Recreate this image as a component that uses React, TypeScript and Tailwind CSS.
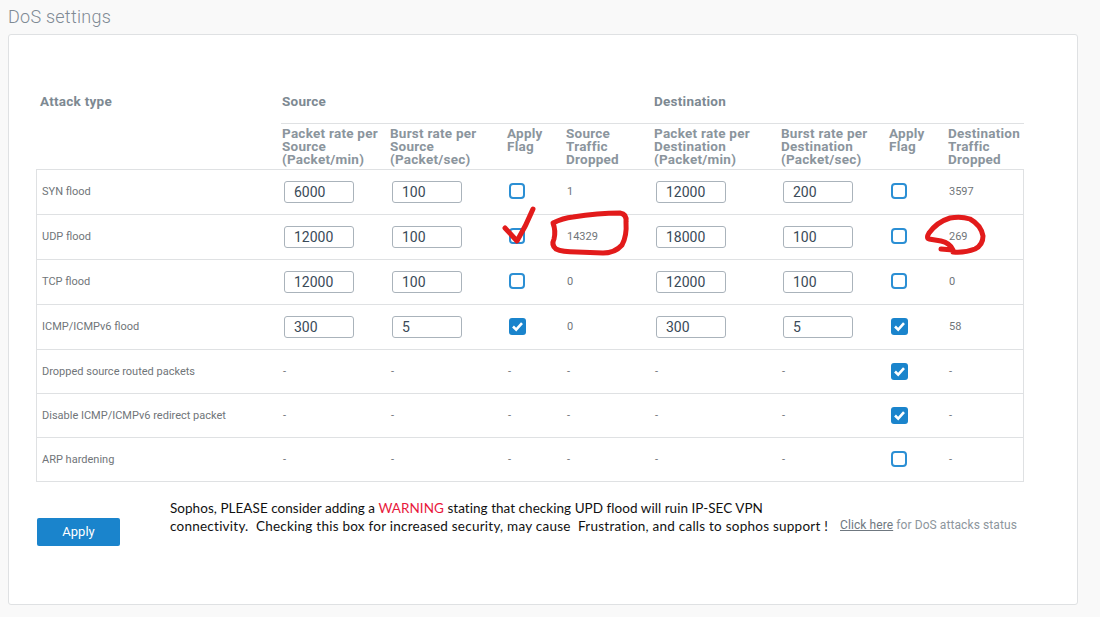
const headCols = "grid grid-cols-[246px_108px_117px_59px_88px_127px_108px_59px_76px]";
const bodyCols = "grid grid-cols-[244px_108px_117px_59px_88px_127px_108px_59px_75px]";

type Row = {
  name: string;
  src?: [string, string, boolean, string];
  dst?: [string, string, boolean, string];
  flag?: boolean;
  h: string;
};

const rows: Row[] = [
  { name: "SYN flood", src: ["6000", "100", false, "1"], dst: ["12000", "200", false, "3597"], h: "h-[45px]" },
  { name: "UDP flood", src: ["12000", "100", false, "14329"], dst: ["18000", "100", false, "269"], h: "h-[45px]" },
  { name: "TCP flood", src: ["12000", "100", false, "0"], dst: ["12000", "100", false, "0"], h: "h-[45px]" },
  { name: "ICMP/ICMPv6 flood", src: ["300", "5", true, "0"], dst: ["300", "5", true, "58"], h: "h-[45px]" },
  { name: "Dropped source routed packets", flag: true, h: "h-[44px] pt-px" },
  { name: "Disable ICMP/ICMPv6 redirect packet", flag: true, h: "h-[44px] pt-px" },
  { name: "ARP hardening", flag: false, h: "h-[44px] pt-px" },
];

function Check({ on }: { on: boolean }) {
  if (on) {
    return (
      <span className="mb-[2px] ml-px flex h-[17px] w-[17px] items-center justify-center rounded-[3px] bg-[#1a84cc]">
        <svg width="13" height="13" viewBox="0 0 13 13" fill="none">
          <path d="M2 6.5 L5.2 9.7 L11 3.2" stroke="#fff" strokeWidth="2.6" />
        </svg>
      </span>
    );
  }
  return <span className="mb-[2px] ml-px block h-[16px] w-[16px] rounded-[4px] border-2 border-[#2b8fd4] bg-white" />;
}

function Num({ value }: { value: string }) {
  return (
    <input
      readOnly
      value={value}
      className="mb-px ml-px h-[22px] w-[70px] rounded-[3px] border border-[#aab3bb] bg-white pl-[9px] text-[14px] text-[#3a4a58] outline-none"
    />
  );
}

function Cell({ children }: { children: React.ReactNode }) {
  return <div className="flex items-center pl-[2px] text-[11px] text-[#707579]">{children}</div>;
}

function Flood({ vals }: { vals: [string, string, boolean, string] }) {
  return (
    <>
      <Cell><Num value={vals[0]} /></Cell>
      <Cell><Num value={vals[1]} /></Cell>
      <Cell><Check on={vals[2]} /></Cell>
      <Cell>{vals[3]}</Cell>
    </>
  );
}

function Dashes() {
  return (
    <>
      <Cell>-</Cell>
      <Cell>-</Cell>
      <Cell>-</Cell>
      <Cell>-</Cell>
    </>
  );
}

export default function App() {
  return (
    <div className="h-[617px] w-[1100px] overflow-hidden bg-[#f9f9f9] font-['Roboto',sans-serif]">
      <h1 className="h-[34px] pl-2 pt-[5px] text-[18px] leading-[24px] font-light tracking-[0.25px] text-[#7f8a94]">DoS settings</h1>

      <div className="ml-2 h-[571px] w-[1070px] rounded-[3px] border border-[#dfe1e3] bg-white pl-[27px]">
        <div className="relative w-[988px]">
          <div className={`${headCols} pt-[60px] pb-[15px] text-[13.5px] leading-[13px] font-bold tracking-[0.25px] text-[#7d8992]`}>
            <div className="pl-[4px]">Attack type</div>
            <div className="col-span-4">Source</div>
            <div className="col-span-4">Destination</div>
          </div>

          <div className={`${headCols} pt-[4px] pb-[3px] text-[13.5px] leading-[13px] font-bold tracking-[0.25px] text-[#8b959d]`}>
            <div className="absolute left-[245px] right-0 top-[88px] border-t border-[#dfe1e3]" />
            <div />
            <div>Packet rate per<br />Source<br />(Packet/min)</div>
            <div>Burst rate per<br />Source<br />(Packet/sec)</div>
            <div>Apply<br />Flag</div>
            <div>Source<br />Traffic<br />Dropped</div>
            <div>Packet rate per<br />Destination<br />(Packet/min)</div>
            <div>Burst rate per<br />Destination<br />(Packet/sec)</div>
            <div>Apply<br />Flag</div>
            <div>Destination<br />Traffic<br />Dropped</div>
          </div>

          <div className="border border-b-0 border-[#dfe1e3]">
            {rows.map((r) => (
              <div key={r.name} className={`${bodyCols} ${r.h} border-b border-[#dfe1e3]`}>
                <div className="flex items-center pl-[5px] text-[11px] text-[#707579]">{r.name}</div>
                {r.src && r.dst ? (
                  <>
                    <Flood vals={r.src} />
                    <Flood vals={r.dst} />
                  </>
                ) : (
                  <>
                    <Dashes />
                    <Cell>-</Cell>
                    <Cell>-</Cell>
                    <Cell><Check on={!!r.flag} /></Cell>
                    <Cell>-</Cell>
                  </>
                )}
              </div>
            ))}
          </div>

          {/* marker scribbles drawn over the table */}
          <svg className="absolute left-[-36px] top-[-35px]" width="1100" height="617" fill="none" stroke="#e21b1b" strokeLinecap="round" strokeLinejoin="round">
            <path d="M505 228 L517 241 Q526 226 533 209" strokeWidth="5" />
            <path d="M553 223 Q563 218 573 217 Q598 213 620 213 Q627 214 626 222 Q627 236 622 245 Q615 253 603 253 L577 252 Q562 252 556 249 Q551 245 554 239 Q556 231 553 223 Z" strokeWidth="5" />
            <path d="M941 249 L953 250 Q950 243 941 241 L929 239 Q926 238 929 233 Q937 222 950 218 Q961 216 970 219 Q981 225 983 236 Q983 245 975 249 Q965 253 953 252" strokeWidth="5" />
          </svg>
        </div>

        <div className="flex">
          <button className="mt-[36px] ml-px h-[28px] w-[83px] rounded-[2px] bg-[#1a84cc] text-[13px] text-white">Apply</button>
          <p className="mt-[17px] ml-[50px] w-[670px] font-['Lato',sans-serif] text-[13.5px] leading-[18px] whitespace-pre text-[#111]">
            <span className="tracking-[0.04px]">Sophos, PLEASE consider adding a <span className="text-[#e8193c]">WARNING</span> stating that checking UPD flood will ruin IP-SEC VPN</span>{"\n"}
            <span className="tracking-[0.24px]">connectivity.  Checking this box for increased security, may cause  Frustration, and calls to sophos support !</span>
          </p>
          <p className="mt-[36px] text-[12px] leading-[14px] tracking-[0.09px] text-[#8d969d]">
            <a className="text-[#6f7880] underline">Click here</a> for DoS attacks status
          </p>
        </div>
      </div>
    </div>
  );
}
